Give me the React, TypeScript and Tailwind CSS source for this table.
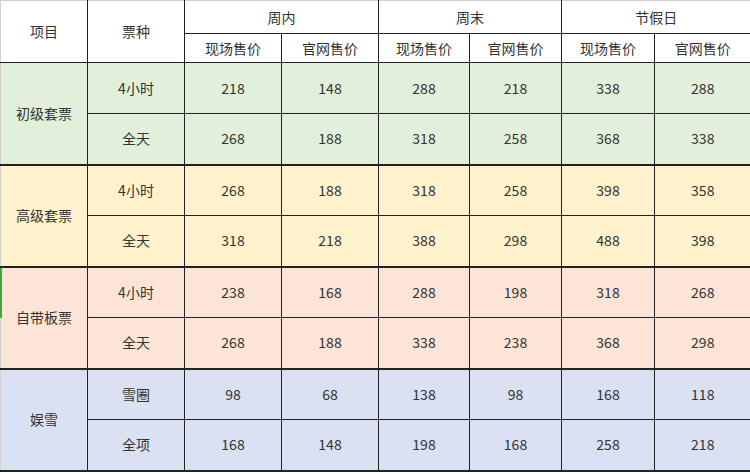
import React from "react";

type Group = { name: string; bg: string; rows: { t: string; v: string[] }[] };

const groups: Group[] = [
  { name: "初级套票", bg: "bg-[#e2efda]", rows: [
    { t: "4小时", v: ["218", "148", "288", "218", "338", "288"] },
    { t: "全天", v: ["268", "188", "318", "258", "368", "338"] },
  ] },
  { name: "高级套票", bg: "bg-[#fff2cc]", rows: [
    { t: "4小时", v: ["268", "188", "318", "258", "398", "358"] },
    { t: "全天", v: ["318", "218", "388", "298", "488", "398"] },
  ] },
  { name: "自带板票", bg: "bg-[#fce4d6]", rows: [
    { t: "4小时", v: ["238", "168", "288", "198", "318", "268"] },
    { t: "全天", v: ["268", "188", "338", "238", "368", "298"] },
  ] },
  { name: "娱雪", bg: "bg-[#d9e1f2]", rows: [
    { t: "雪圈", v: ["98", "68", "138", "98", "168", "118"] },
    { t: "全项", v: ["168", "148", "198", "168", "258", "218"] },
  ] },
];

const widths = [87, 97, 97, 97, 91, 92, 93, 96];

export default function App() {
  return (
    <div
      className="relative w-[750px] h-[474px] bg-white overflow-hidden text-[14px] text-[#333333]"
      style={{ fontFamily: '"Noto Sans CJK SC", "Noto Sans", sans-serif' }}
    >
      <table className="table-fixed border-collapse w-[750px]">
        <colgroup>
          {widths.map((w, i) => (
            <col key={i} style={{ width: w }} />
          ))}
        </colgroup>
        <tbody>
          <tr className="h-[33px]">
            <td rowSpan={2} className="border-t border-l border-[#d0d0d0] border-b border-b-[#222] border-r border-r-[#222] text-center align-middle">项目</td>
            <td rowSpan={2} className="border-t border-t-[#d0d0d0] border-b border-r border-[#222] text-center align-middle">票种</td>
            <td colSpan={2} className="border-t border-t-[#d0d0d0] border-b border-r border-[#222] text-center align-middle">周内</td>
            <td colSpan={2} className="border-t border-t-[#d0d0d0] border-b border-r border-[#222] text-center align-middle">周末</td>
            <td colSpan={2} className="border-t border-t-[#d0d0d0] border-b border-[#222] text-center align-middle">节假日</td>
          </tr>
          <tr className="h-[29px]">
            {["现场售价", "官网售价", "现场售价", "官网售价", "现场售价", "官网售价"].map((h, i) => (
              <td key={i} className={`border-b border-[#222] text-center align-middle ${i < 5 ? "border-r" : ""}`}>{h}</td>
            ))}
          </tr>
          {groups.map((g) =>
            g.rows.map((r, ri) => (
              <tr key={g.name + ri} className={`h-[51px] ${g.bg}`}>
                {ri === 0 && (
                  <td rowSpan={2} className="border-l border-l-[#d0d0d0] border-r border-r-[#222] border-b-2 border-b-[#222] text-center align-middle">
                    {g.name}
                  </td>
                )}
                <td className={`border-r border-[#222] text-center align-middle ${ri === 1 ? "border-b-2" : "border-b"}`}>{r.t}</td>
                {r.v.map((v, vi) => (
                  <td
                    key={vi}
                    className={`border-[#222] text-center align-middle ${vi < 5 ? "border-r" : ""} ${ri === 1 ? "border-b-2" : "border-b"}`}
                  >
                    {v}
                  </td>
                ))}
              </tr>
            ))
          )}
        </tbody>
      </table>
      <div className="absolute left-0 top-[268px] w-[2px] h-[50px] bg-[#3cab3c]" />
    </div>
  );
}
